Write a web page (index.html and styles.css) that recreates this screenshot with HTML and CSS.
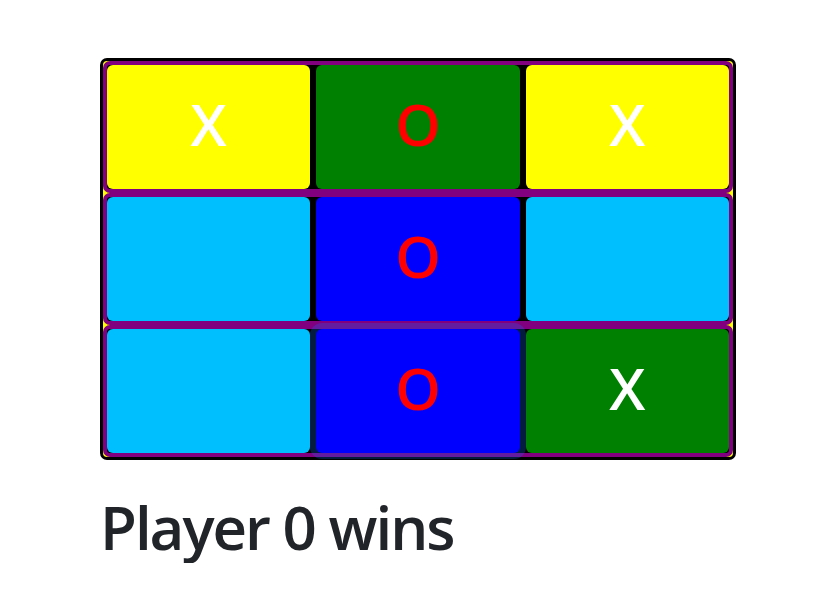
FILE: index.html
```html
<!DOCTYPE html>
<html lang="en">
<head>
  <meta charset="UTF-8">
  <title>Tic Tac Toe</title>
  <link rel="stylesheet" href="styles.css">
</head>
<body>

<div class="page">
  <div class="board">
    <div class="board-row">
      <button class="cell yellow mark-x">X</button>
      <button class="cell green mark-o">O</button>
      <button class="cell yellow mark-x">X</button>
    </div>
    <div class="board-row">
      <button class="cell cyan"></button>
      <button class="cell blue mark-o">O</button>
      <button class="cell cyan"></button>
    </div>
    <div class="board-row">
      <button class="cell cyan"></button>
      <button class="cell blue mark-o focused">O</button>
      <button class="cell green mark-x">X</button>
    </div>
  </div>

  <h1 class="status">Player 0 wins</h1>
</div>

</body>
</html>
```

FILE: styles.css
```css
/* ----- page ----- */
body {
  margin: 0;
  font-family: "Open Sans", "Noto Sans", sans-serif;
  color: #212529;
  background: #fff;
}

.page {
  padding: 58px 0 0 100px;
}

/* ----- board ----- */
.board {
  width: 630px;
  border: 3px solid #000;
  border-radius: 7px;
  background: #ff0;
}

.board-row {
  display: flex;
  gap: 6px;
  border: 4px solid #800080;
  border-radius: 7px;
  background: #000;
}

.cell {
  flex: 1;
  height: 124px;
  border: none;
  border-radius: 6px;
  padding: 0 0 6px;
  font-family: "Open Sans", "Noto Sans", sans-serif;
  font-size: 58px;
  font-weight: 600;
  line-height: 1;
  cursor: pointer;
}

.cell.focused {
  position: relative;
  box-shadow: 0 0 0 6px rgba(13, 110, 253, 0.25);
}

.yellow { background: #ff0; }
.green  { background: #008000; }
.cyan   { background: #00bfff; }
.blue   { background: #00f; }

.mark-x { color: #fff; }
.mark-o { color: #f00; }

/* ----- status ----- */
.status {
  margin: 31px 0 0;
  font-size: 60px;
  font-weight: 600;
  line-height: 1.2;
  letter-spacing: -2px;
}
```
